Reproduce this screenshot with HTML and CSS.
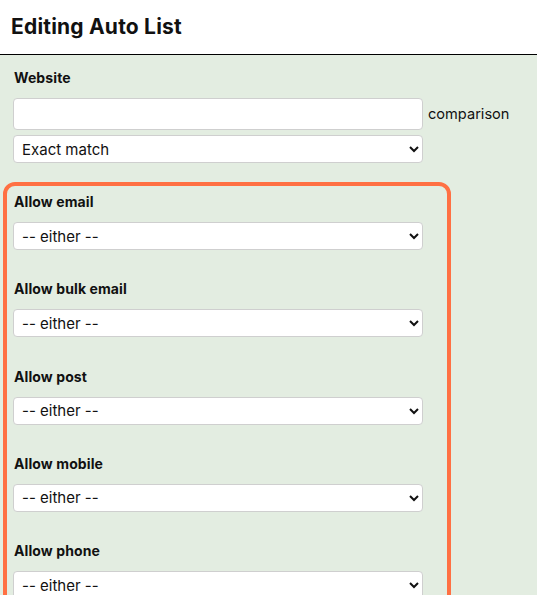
FILE: index.html
```html
<!DOCTYPE html>
<html>
<head>
<meta charset="utf-8">
<link rel="stylesheet" href="styles.css">
</head>
<body>
<header class="header"><h1 class="title">Editing Auto List</h1></header>
<main class="main">
  <div class="field">
    <label class="label">Website</label>
    <div class="row">
      <input class="input" type="text">
      <span class="aside">comparison</span>
    </div>
    <select class="select"><option>Exact match</option></select>
  </div>
  <div class="box">
    <div class="group">
      <label class="label">Allow email</label>
      <select class="select"><option>-- either --</option></select>
    </div>
    <div class="group">
      <label class="label">Allow bulk email</label>
      <select class="select"><option>-- either --</option></select>
    </div>
    <div class="group">
      <label class="label">Allow post</label>
      <select class="select"><option>-- either --</option></select>
    </div>
    <div class="group">
      <label class="label">Allow mobile</label>
      <select class="select"><option>-- either --</option></select>
    </div>
    <div class="group">
      <label class="label">Allow phone</label>
      <select class="select"><option>-- either --</option></select>
    </div>
  </div>
</main>
</body>
</html>
```
FILE: styles.css
```css
html, body { margin: 0; padding: 0; }
body {
  font-family: Inter, "Noto Sans", sans-serif;
  color: #111;
  background: #e3ede1;
  height: 595px;
  overflow: hidden;
}
.header {
  background: #fff;
  height: 54px;
  border-bottom: 1px solid #000;
  display: flex;
  align-items: center;
  padding-left: 11px;
}
.title {
  margin: 0;
  font-size: 21px;
  font-weight: 700;
  line-height: 24px;
  margin-top: -1px;
  letter-spacing: 0.2px;
}
.main {
  padding: 13px 0 0 0;
}
.field {
  padding-left: 13px;
}
.label {
  display: block;
  font-size: 14px;
  font-weight: 700;
  line-height: 20px;
  padding-left: 1px;
  letter-spacing: 0.1px;
}
.row {
  display: flex;
  align-items: center;
  margin-top: 10px;
}
.input {
  box-sizing: border-box;
  width: 410px;
  height: 32px;
  border: 1px solid #cfcfcf;
  border-radius: 4px;
  background: #fff;
  margin: 0;
}
.aside {
  font-size: 14.6px;
  margin-left: 5px;
}
.select {
  box-sizing: border-box;
  display: block;
  width: 410px;
  height: 28px;
  border: 1px solid #cfcfcf;
  border-radius: 4px;
  background: #fff;
  font-family: Inter, "Noto Sans", sans-serif;
  font-size: 15px;
  color: #111;
  padding: 0 4px;
  margin: 0;
}
.field .select { margin-top: 5px; }
.box {
  margin: 19px 0 0 3px;
  width: 448px;
  box-sizing: border-box;
  border: 4px solid #ff7043;
  border-radius: 12px;
  padding: 6px 0 0 6px;
  height: 500px;
}
.group { margin-bottom: 29.3px; }
.group .select { margin-top: 10px; }
```
